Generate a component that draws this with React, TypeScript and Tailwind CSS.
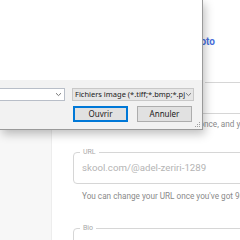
import React from "react";

function Chevron() {
  return (
    <svg width="7" height="5" viewBox="0 0 7 5" className="shrink-0">
      <path d="M1 1.2 L3.5 3.6 L6 1.2" fill="none" stroke="#6a6a6a" strokeWidth="0.9" />
    </svg>
  );
}

function Field({ label, children, className = "" }: { label: string; children?: React.ReactNode; className?: string }) {
  return (
    <div className={`relative border border-[#d6d6d6] rounded-[4px] ${className}`}>
      <span className="absolute -top-[5px] left-[6px] bg-white px-[3px] text-[7px] leading-[9px] text-[#a8a8a8]">
        {label}
      </span>
      {children}
    </div>
  );
}

export default function App() {
  return (
    <div className="relative w-[240px] h-[240px] overflow-hidden bg-white font-['Roboto',sans-serif]">
      {/* settings page underneath */}
      <div className="flex h-full">
        <aside className="w-[52px] shrink-0 bg-[#f7f7f7] border-r border-[#ededed]" />
        <main className="flex-1 min-w-0 pl-[21px]">
          <div className="w-[280px]">
            <div className="h-[82px] flex items-center">
              <div className="w-[142px] text-right text-[10px] font-bold text-[#4a6fdc]">
                Change profile photo
              </div>
            </div>

            <div className="flex gap-[6px]">
              <Field label="First name" className="w-[80px] h-[32px]" />
              <Field label="Last name" className="w-[130px] h-[32px]" />
            </div>
            <p className="mt-[4px] text-[8.2px] leading-[12px] text-[#8a8a8a] whitespace-nowrap pl-[9px]">
              You can only change your name once, and you must use your real name.
            </p>

            <Field label="URL" className="mt-[22px] h-[32px] flex items-center pl-[8px]">
              <span className="text-[9.7px] text-[#b4b4b4] whitespace-nowrap">skool.com/@adel-zeriri-1289</span>
            </Field>
            <p className="mt-[6px] text-[8.2px] leading-[12px] text-[#8a8a8a] whitespace-nowrap pl-[9px]">
              You can change your URL once you've got 90 contributions.
            </p>

            <Field label="Bio" className="mt-[26px] h-[80px]" />
          </div>
        </main>
      </div>

      {/* Windows open-file dialog on top */}
      <div className="absolute left-0 top-0 w-[203px] h-[130px] flex flex-col bg-white border-r border-b border-[#9a9a9a] shadow-[2px_4px_9px_rgba(0,0,0,0.25)] font-['Noto_Sans',sans-serif]">
        <div className="flex-1 bg-white" />
        <div className="h-[49px] bg-[#f2f2f2] pt-[8px]">
          <div className="flex">
            <div className="w-[65px] h-[13px] bg-white border border-l-0 border-[#b8bec8] flex items-center justify-end pr-[2px]">
              <Chevron />
            </div>
            <div className="ml-[7px] w-[122px] h-[13px] bg-[#e6e6e6] border border-[#c8c8c8] flex items-center justify-between pl-[2px] pr-[2px]">
              <span className="text-[7.5px] leading-[11px] text-[#1a1a1a] whitespace-nowrap">Fichiers image (*.tiff;*.bmp;*.pj</span>
              <Chevron />
            </div>
          </div>
          <div className="flex mt-[5px]">
            <button className="ml-[73px] w-[55px] h-[16px] bg-[#e1e1e1] border border-[#0078d7] shadow-[inset_0_0_0_1px_#0078d7] text-[8px] leading-[14px] text-[#1a1a1a]">
              Ouvrir
            </button>
            <button className="ml-[9px] w-[55px] h-[16px] bg-[#e1e1e1] border border-[#adadad] text-[8px] leading-[14px] text-[#1a1a1a]">
              Annuler
            </button>
          </div>
        </div>
        <svg width="6" height="6" viewBox="0 0 6 6" className="absolute right-[1px] bottom-[1px]">
          <rect x="4" y="0" width="1" height="1" fill="#a0a0a0" />
          <rect x="2" y="2" width="1" height="1" fill="#a0a0a0" />
          <rect x="4" y="2" width="1" height="1" fill="#a0a0a0" />
          <rect x="0" y="4" width="1" height="1" fill="#a0a0a0" />
          <rect x="2" y="4" width="1" height="1" fill="#a0a0a0" />
          <rect x="4" y="4" width="1" height="1" fill="#a0a0a0" />
        </svg>
      </div>
    </div>
  );
}
